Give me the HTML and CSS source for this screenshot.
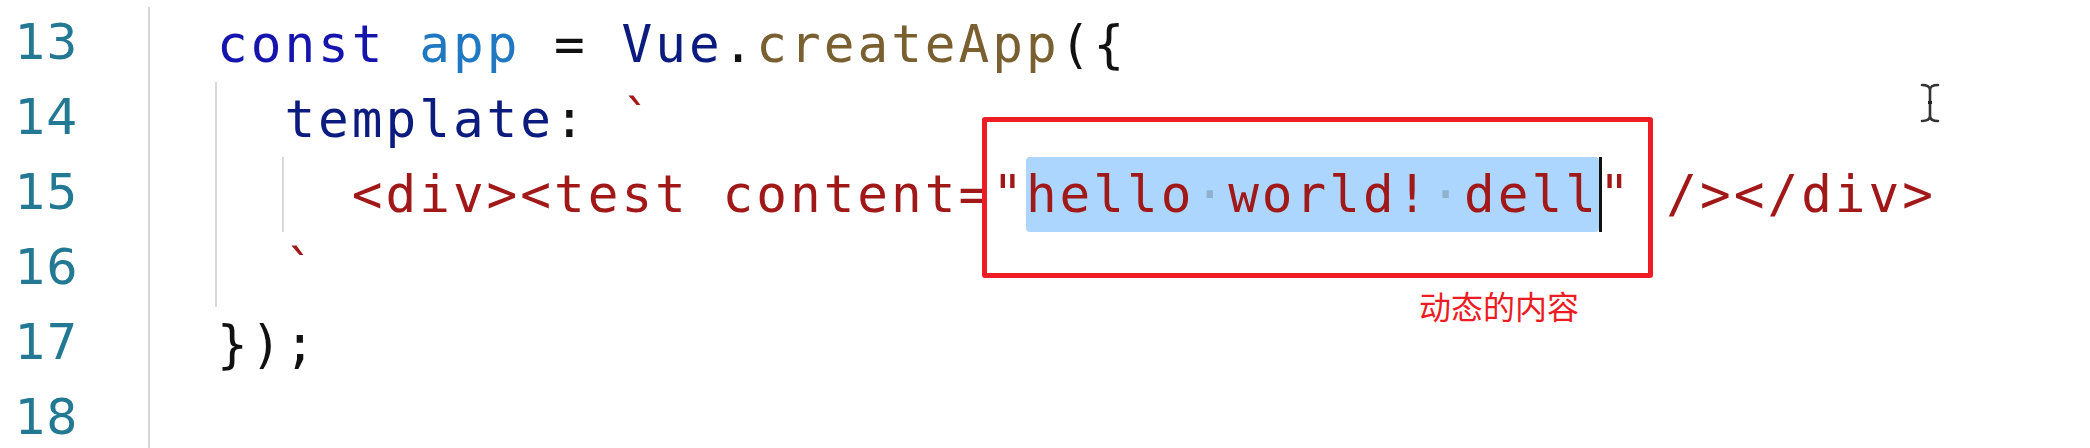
FILE: index.html
```html
<!DOCTYPE html>
<html lang="zh">
<head>
    <meta charset="UTF-8">
    <title>Vue createApp</title>
    <link rel="stylesheet" href="styles.css">
</head>
<body>

<div class="editor">
    <div class="gutter">
        <div class="ln">13</div>
        <div class="ln">14</div>
        <div class="ln">15</div>
        <div class="ln">16</div>
        <div class="ln">17</div>
        <div class="ln">18</div>
    </div>
    <div class="code">
        <div class="line"><span class="kw">const</span> <span class="var">app</span> = <span class="obj">Vue</span>.<span class="fn">createApp</span>({</div>
        <div class="line"><span class="indent"></span><span class="obj">template</span>: <span class="str">`</span></div>
        <div class="line str"><span class="indent"></span><span class="indent"></span>&lt;div&gt;&lt;test content="<span class="sel">hello<span class="ws">·</span>world!<span class="ws">·</span>dell</span>" /&gt;&lt;/div&gt;</div>
        <div class="line"><span class="indent"></span><span class="str">`</span></div>
        <div class="line">});</div>
        <div class="line"></div>
    </div>
</div>

<!-- annotation drawn over the editor -->
<div class="note-box"></div>
<div class="note-label">动态的内容</div>

<svg class="ibeam" width="20" height="40" viewBox="0 0 20 40">
    <path d="M2 2 Q10 2 10 7 Q10 2 18 2 M10 7 V33 M2 38 Q10 38 10 33 Q10 38 18 38" fill="none" stroke="#333" stroke-width="2.6" stroke-linecap="round"/>
    <rect x="8" y="18" width="4" height="3" fill="#222"/>
</svg>

</body>
</html>
```

FILE: styles.css
```css
body {
    margin: 0;
    background: #fff;
}
.editor {
    --cw: 33.7px;
    display: flex;
    padding-top: 7px;
}
.gutter {
    width: 150px;
    border-right: 2px solid #d6d6d6;
    padding-left: 15px;
    box-sizing: border-box;
}
.ln {
    height: 75px;
    line-height: 72px;
    font-family: "DejaVu Sans", sans-serif;
    font-size: 49px;
    color: #237893;
}
.code {
    padding-left: 67px;
    font-family: "DejaVu Sans Mono", monospace;
    font-size: 51px;
    letter-spacing: 3px;
    color: #111;
}
.line {
    height: 75px;
    line-height: 75px;
    white-space: pre;
}
.indent {
    display: inline-block;
    width: calc(var(--cw) * 2);
    height: 75px;
    vertical-align: top;
    margin-left: -2px;
    margin-right: 2px;
    background: linear-gradient(#d9d9d9, #d9d9d9) no-repeat left top / 2px 100%;
}
.kw {
    color: #1515ae;
}
.var {
    color: #1f78c1;
}
.obj {
    color: #0b1b7e;
}
.fn {
    color: #7a6030;
}
.str {
    color: #a11818;
}
.sel {
    display: inline-block;
    height: 75px;
    line-height: 75px;
    vertical-align: top;
    background: #add6ff;
    border-radius: 4px;
    position: relative;
}
.sel::after {
    content: "";
    position: absolute;
    right: -3px;
    top: 0;
    width: 3px;
    height: 75px;
    background: #111;
}
.ws {
    color: #8fb0cf;
}
.note-box {
    position: absolute;
    left: 982px;
    top: 117px;
    width: 671px;
    height: 161px;
    box-sizing: border-box;
    border: 5px solid #ee1d25;
    border-radius: 3px;
}
.note-label {
    position: absolute;
    left: 1419px;
    top: 286px;
    font-family: "Noto Sans CJK SC", sans-serif;
    font-size: 32px;
    line-height: 38px;
    color: #ec1c24;
}
.ibeam {
    position: absolute;
    left: 1920px;
    top: 83px;
}
```
